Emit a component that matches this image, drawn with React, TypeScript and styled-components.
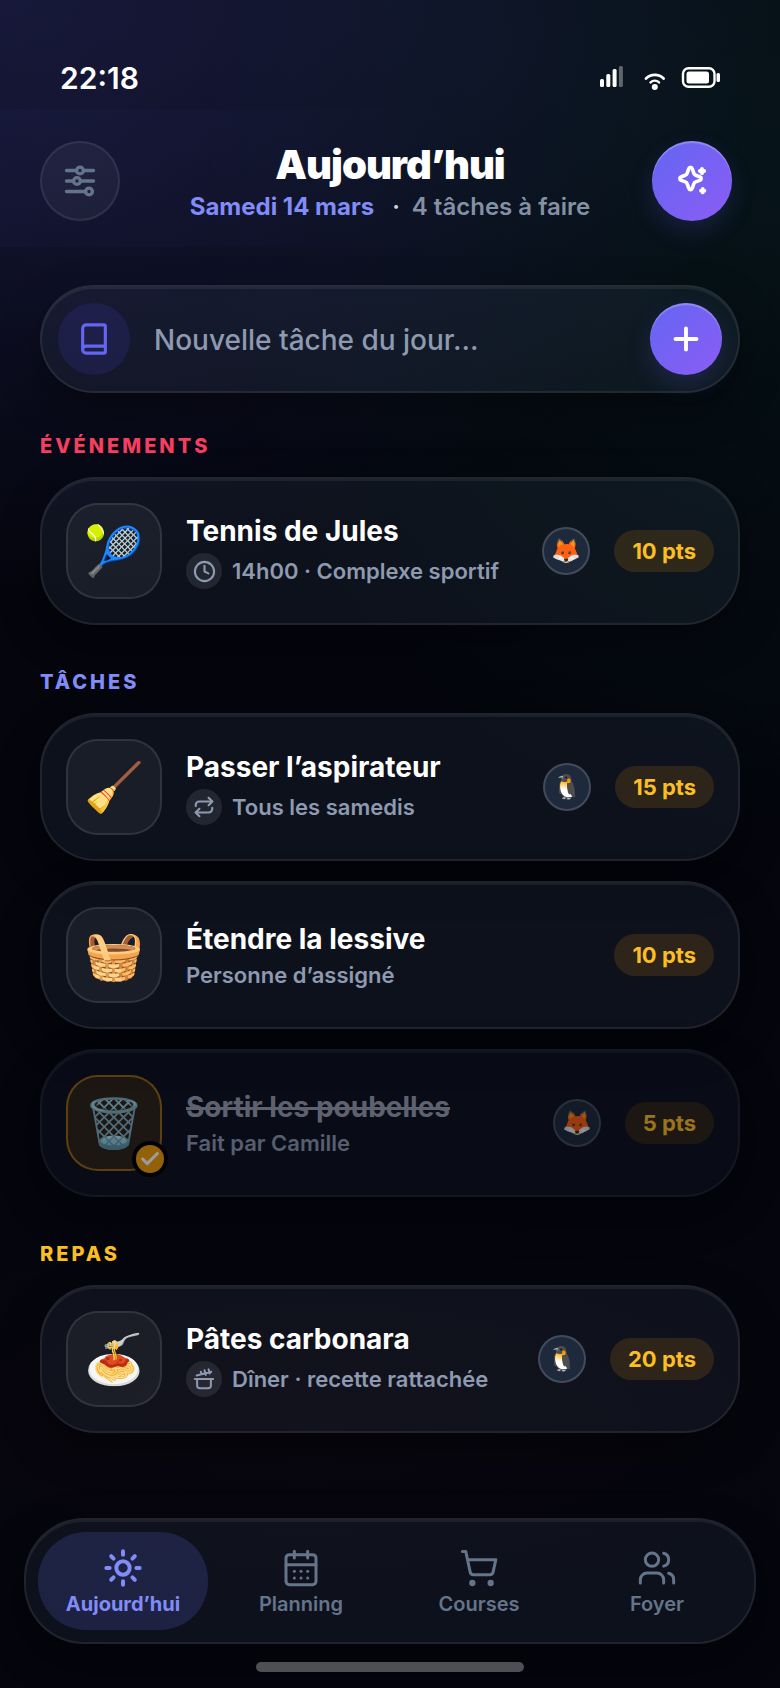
import React, { useState } from "react";
import styled, { createGlobalStyle } from "styled-components";
import {
	Book,
	CalendarDays,
	Check,
	Clock,
	Plus,
	Repeat,
	ShoppingCart,
	Sun,
	Users,
} from "lucide-react";

const GlobalStyle = createGlobalStyle`
	*, *::before, *::after {
		box-sizing: border-box;
	}
	body {
		margin: 0;
		background: #04050d;
		color: #ffffff;
		font-family: Inter, "Liberation Sans", sans-serif;
		-webkit-font-smoothing: antialiased;
	}
	button, input {
		font-family: inherit;
	}
	h1, h2, h3, p {
		margin: 0;
	}
`;

const Page = styled.div`
	display: flex;
	flex-direction: column;
	min-height: 100vh;
	background:
		radial-gradient(ellipse 100% 600px at 0% 0%, rgba(99, 102, 241, 0.18), transparent),
		radial-gradient(ellipse 75% 680px at 100% 10%, rgba(16, 185, 129, 0.07), transparent),
		radial-gradient(ellipse 90% 460px at 50% 0%, rgba(70, 90, 160, 0.07), transparent),
		radial-gradient(ellipse 80% 220px at 40% 84%, rgba(120, 30, 50, 0.04), transparent),
		#04050d;
`;

const StatusBar = styled.div`
	display: flex;
	align-items: center;
	justify-content: space-between;
	padding: 60px 60px 13px;
	font-size: 30px;
	font-weight: 600;
	line-height: 36px;
`;

const Header = styled.header`
	display: grid;
	grid-template-columns: 1fr auto 1fr;
	align-items: center;
	padding: 30px 40px 24px;
	background: linear-gradient(90deg, rgba(99, 102, 241, 0.04), transparent 60%);
`;

const HeaderEnd = styled.div`
	display: flex;
	justify-content: flex-end;
	padding-right: 8px;
`;

const Heading = styled.div`
	text-align: center;
`;

const Title = styled.h1`
	font-size: 40px;
	font-weight: 900;
	line-height: 52px;
	letter-spacing: -1px;
`;

const Subtitle = styled.p`
	display: flex;
	justify-content: center;
	gap: 10px;
	font-size: 24px;
	font-weight: 600;
	line-height: 32px;
	color: #8491a5;
`;

const DateText = styled.span`
	margin-right: 8px;
	font-weight: 700;
	color: #818cf8;
`;

const Dot = styled.span`
	margin-right: 2px;
	color: #cbd5e1;
`;

const RoundButton = styled.button<{ $size: number; $primary?: boolean }>`
	display: flex;
	flex: none;
	align-items: center;
	justify-content: center;
	width: ${(p) => p.$size}px;
	height: ${(p) => p.$size}px;
	padding: 0;
	border-radius: 50%;
	border: ${(p) => (p.$primary ? "none" : "2px solid rgba(255, 255, 255, 0.08)")};
	color: ${(p) => (p.$primary ? "#ffffff" : "#64748b")};
	background: ${(p) =>
		p.$primary
			? "linear-gradient(135deg, #6366f1, #8b5cf6)"
			: "rgba(255, 255, 255, 0.05)"};
	box-shadow: ${(p) =>
		p.$primary
			? "inset 0 2px 1px rgba(255, 255, 255, 0.25), 0 10px 24px rgba(99, 102, 241, 0.18)"
			: "none"};
`;

const Main = styled.main`
	display: flex;
	flex-direction: column;
	gap: 44px;
	padding: 38px 40px 60px;
`;

const glass = `
	border: 2px solid rgba(255, 255, 255, 0.08);
	background: rgba(140, 175, 220, 0.075);
	box-shadow:
		inset 0 2px 0 rgba(255, 255, 255, 0.06),
		0 16px 40px rgba(0, 0, 0, 0.35);
`;

const AddForm = styled.form`
	display: flex;
	align-items: center;
	height: 108px;
	margin-bottom: -4px;
	padding: 0 16px;
	border-radius: 54px;
	${glass}
`;

const BookBadge = styled.span`
	display: flex;
	flex: none;
	align-items: center;
	justify-content: center;
	width: 72px;
	height: 72px;
	border-radius: 50%;
	color: #6366f1;
	background: rgba(79, 70, 229, 0.15);
`;

const TaskInput = styled.input`
	flex: 1;
	min-width: 0;
	padding: 2px 24px 0;
	border: none;
	outline: none;
	background: transparent;
	color: #ffffff;
	font-size: 28px;
	font-weight: 500;
	line-height: 36px;
	&::placeholder {
		color: #8d9ab0;
		opacity: 1;
	}
`;

const Section = styled.section`
	display: flex;
	flex-direction: column;
	gap: 20px;
`;

const SectionLabel = styled.h2<{ $color: string }>`
	padding-top: 2px;
	font-size: 20px;
	font-weight: 800;
	line-height: 22px;
	letter-spacing: 3px;
	text-transform: uppercase;
	color: ${(p) => p.$color};
`;

const Card = styled.article<{ $done?: boolean }>`
	display: flex;
	align-items: center;
	gap: 24px;
	padding: 24px;
	border-radius: 56px;
	${glass}
	opacity: ${(p) => (p.$done ? 0.6 : 1)};
`;

const EmojiTile = styled.div<{ $done?: boolean }>`
	position: relative;
	display: flex;
	flex: none;
	align-items: center;
	justify-content: center;
	width: 96px;
	height: 96px;
	border-radius: 32px;
	border: 2px solid ${(p) => (p.$done ? "rgba(245, 158, 11, 0.55)" : "rgba(255, 255, 255, 0.1)")};
	background: ${(p) => (p.$done ? "rgba(245, 158, 11, 0.14)" : "rgba(255, 255, 255, 0.05)")};
	font-size: 48px;
	line-height: 56px;
`;

const DoneMark = styled.span`
	position: absolute;
	right: -8px;
	bottom: -8px;
	display: flex;
	align-items: center;
	justify-content: center;
	width: 36px;
	height: 36px;
	border-radius: 50%;
	border: 4px solid #000000;
	background: #f59e0b;
	color: #ffffff;
`;

const CardText = styled.div`
	display: flex;
	flex: 1;
	flex-direction: column;
	gap: 4px;
	min-width: 0;
`;

const CardTitle = styled.h3<{ $done?: boolean }>`
	font-size: 28px;
	font-weight: 700;
	line-height: 36px;
	color: ${(p) => (p.$done ? "#9a9fb0" : "#ffffff")};
	text-decoration: ${(p) => (p.$done ? "line-through" : "none")};
	text-decoration-thickness: 3px;
`;

const Meta = styled.p`
	display: flex;
	align-items: center;
	gap: 10px;
	font-size: 22px;
	font-weight: 600;
	line-height: 28px;
	color: #8d9ab0;
`;

const MetaIcon = styled.span`
	display: flex;
	align-items: center;
	justify-content: center;
	width: 36px;
	height: 36px;
	border-radius: 50%;
	background: rgba(255, 255, 255, 0.09);
`;

const Avatar = styled.span`
	display: flex;
	flex: none;
	align-items: center;
	justify-content: center;
	width: 48px;
	height: 48px;
	border-radius: 50%;
	border: 2px solid rgba(255, 255, 255, 0.16);
	background: #1e293b;
	font-size: 24px;
	line-height: 28px;
`;

const Points = styled.span`
	flex: none;
	padding: 7px 18px;
	border-radius: 21px;
	background: rgba(245, 158, 11, 0.14);
	color: #fbbf24;
	font-size: 22px;
	font-weight: 700;
	line-height: 28px;
`;

const TabBar = styled.nav`
	display: flex;
	gap: 8px;
	margin: auto 24px 18px;
	padding: 12px;
	border-radius: 60px;
	${glass}
`;

const Tab = styled.button<{ $active?: boolean }>`
	display: flex;
	flex: 1;
	flex-direction: column;
	align-items: center;
	justify-content: center;
	gap: 4px;
	height: 98px;
	padding: 2px 0 0;
	border: none;
	border-radius: 48px;
	background: ${(p) => (p.$active ? "rgba(99, 112, 241, 0.19)" : "transparent")};
	color: ${(p) => (p.$active ? "#818cf8" : "#64748b")};
	font-size: 20px;
	font-weight: ${(p) => (p.$active ? 700 : 600)};
	line-height: 24px;
`;

const HomeIndicator = styled.div`
	width: 268px;
	height: 10px;
	margin: 0 auto 16px;
	border-radius: 5px;
	background: #4e4f55;
`;

const StatusIcons = () => (
	<svg width="120" height="26" viewBox="0 0 120 26" fill="none">
		<g fill="#ffffff">
			<rect x="0" y="14" width="4" height="8" rx="1.5" />
			<rect x="6.3" y="9" width="4" height="13" rx="1.5" />
			<rect x="12.6" y="4" width="4" height="18" rx="1.5" />
			<rect x="18.9" y="1" width="4" height="21" rx="1.5" opacity="0.35" />
			<circle cx="54.8" cy="22" r="3" />
			<rect x="86.5" y="6.5" width="22.5" height="12" rx="2.5" />
			<rect x="116.5" y="8" width="3.5" height="9" rx="1.5" />
		</g>
		<g stroke="#ffffff" strokeLinecap="round">
			<path d="M46 13.4a12.6 12.6 0 0 1 17.6 0" strokeWidth="2.8" />
			<path d="M50.6 17.4a6.4 6.4 0 0 1 8.4 0" strokeWidth="2.5" />
			<rect x="83" y="3.2" width="31.5" height="18.6" rx="5.5" strokeWidth="2.4" />
		</g>
	</svg>
);

const SlidersIcon = () => (
	<svg width="32" height="32" viewBox="0 0 32 32" fill="none" stroke="currentColor" strokeWidth="3.4" strokeLinecap="round">
		<path d="M2.5 5.5H12M20 5.5h9.5M2.5 16H9M17 16h12.5M2.5 26.5H21" />
		<circle cx="16" cy="5.5" r="3.4" />
		<circle cx="13" cy="16" r="3.4" />
		<circle cx="25" cy="26.5" r="3.4" />
	</svg>
);

const SparklesIcon = () => (
	<svg width="36" height="36" viewBox="0 0 36 36" fill="none" stroke="currentColor" strokeLinecap="round" strokeLinejoin="round">
		<path
			strokeWidth="3.6"
			d="M14.7 5.9c.7-2 2.9-2 3.6 0l1.6 4.5c.3.9.9 1.5 1.8 1.8l4 1.5c2 .7 2 3 0 3.7l-4 1.5c-.9.3-1.5.9-1.8 1.8l-1.6 4.5c-.7 2-2.9 2-3.6 0l-1.6-4.5c-.3-.9-.9-1.5-1.8-1.8l-4-1.5c-2-.7-2-3 0-3.7l4-1.5c.9-.3 1.5-.9 1.8-1.8z"
		/>
		<path strokeWidth="3.8" d="M28 5.8v4.4M25.8 8h4.4M28.7 26v3.4M27 27.7h3.4" />
	</svg>
);

const PotIcon = () => (
	<svg width="22" height="22" viewBox="0 0 24 24" fill="none" stroke="currentColor" strokeWidth="2.2" strokeLinecap="round" strokeLinejoin="round">
		<path d="M2 12h20M4.5 12v7a3 3 0 0 0 3 3h9a3 3 0 0 0 3-3v-7" />
		<path d="m4 8.2 16-4.2M8.5 4l1 2.8M12.5 2.5l1.5 5M17 1.5l1.3 4.5" />
	</svg>
);

const metaIcons = {
	clock: <Clock size={23} strokeWidth={2.2} />,
	repeat: <Repeat size={22} strokeWidth={2.4} />,
	pot: <PotIcon />,
};

interface Task {
	emoji: string;
	title: string;
	meta: string;
	icon?: keyof typeof metaIcons;
	avatar?: string;
	points: number;
	done?: boolean;
}

const sections: { label: string; color: string; tasks: Task[] }[] = [
	{
		label: "Événements",
		color: "#f43f5e",
		tasks: [
			{ emoji: "🎾", title: "Tennis de Jules", meta: "14h00 · Complexe sportif", icon: "clock", avatar: "🦊", points: 10 },
		],
	},
	{
		label: "Tâches",
		color: "#818cf8",
		tasks: [
			{ emoji: "🧹", title: "Passer l’aspirateur", meta: "Tous les samedis", icon: "repeat", avatar: "🐧", points: 15 },
			{ emoji: "🧺", title: "Étendre la lessive", meta: "Personne d’assigné", points: 10 },
			{ emoji: "🗑️", title: "Sortir les poubelles", meta: "Fait par Camille", avatar: "🦊", points: 5, done: true },
		],
	},
	{
		label: "Repas",
		color: "#fbbf24",
		tasks: [
			{ emoji: "🍝", title: "Pâtes carbonara", meta: "Dîner · recette rattachée", icon: "pot", avatar: "🐧", points: 20 },
		],
	},
];

const tabs = [
	{ label: "Aujourd’hui", icon: <Sun size={40} strokeWidth={2.4} /> },
	{ label: "Planning", icon: <CalendarDays size={40} strokeWidth={1.8} /> },
	{ label: "Courses", icon: <ShoppingCart size={40} strokeWidth={1.8} /> },
	{ label: "Foyer", icon: <Users size={40} strokeWidth={1.8} /> },
];

const TaskCard = ({ task }: { task: Task }) => (
	<Card $done={task.done}>
		<EmojiTile $done={task.done}>
			{task.emoji}
			{task.done && (
				<DoneMark>
					<Check size={22} strokeWidth={3.4} />
				</DoneMark>
			)}
		</EmojiTile>
		<CardText>
			<CardTitle $done={task.done}>{task.title}</CardTitle>
			<Meta>
				{task.icon && <MetaIcon>{metaIcons[task.icon]}</MetaIcon>}
				{task.meta}
			</Meta>
		</CardText>
		{task.avatar && <Avatar>{task.avatar}</Avatar>}
		<Points>{task.points} pts</Points>
	</Card>
);

function App() {
	const [activeTab, setActiveTab] = useState("Aujourd’hui");
	const [draft, setDraft] = useState("");

	return (
		<Page>
			<GlobalStyle />
			<StatusBar>
				<span>22:18</span>
				<StatusIcons />
			</StatusBar>
			<Header>
				<RoundButton $size={80} type="button" aria-label="Filtres">
					<SlidersIcon />
				</RoundButton>
				<Heading>
					<Title>Aujourd’hui</Title>
					<Subtitle>
						<DateText>Samedi 14 mars</DateText>
						<Dot>·</Dot>
						<span>4 tâches à faire</span>
					</Subtitle>
				</Heading>
				<HeaderEnd>
					<RoundButton $size={80} $primary type="button" aria-label="Suggestions">
						<SparklesIcon />
					</RoundButton>
				</HeaderEnd>
			</Header>
			<Main>
				<AddForm onSubmit={(e) => e.preventDefault()}>
					<BookBadge>
						<Book size={34} strokeWidth={2.2} />
					</BookBadge>
					<TaskInput
						aria-label="Nouvelle tâche du jour"
						placeholder="Nouvelle tâche du jour…"
						value={draft}
						onChange={(e) => setDraft(e.target.value)}
					/>
					<RoundButton $size={72} $primary type="submit" aria-label="Ajouter">
						<Plus size={36} strokeWidth={2.6} />
					</RoundButton>
				</AddForm>
				{sections.map((section) => (
					<Section key={section.label}>
						<SectionLabel $color={section.color}>{section.label}</SectionLabel>
						{section.tasks.map((task) => (
							<TaskCard key={task.title} task={task} />
						))}
					</Section>
				))}
			</Main>
			<TabBar>
				{tabs.map((tab) => (
					<Tab
						key={tab.label}
						type="button"
						$active={tab.label === activeTab}
						onClick={() => setActiveTab(tab.label)}
					>
						{tab.icon}
						{tab.label}
					</Tab>
				))}
			</TabBar>
			<HomeIndicator />
		</Page>
	);
}

export default App;
